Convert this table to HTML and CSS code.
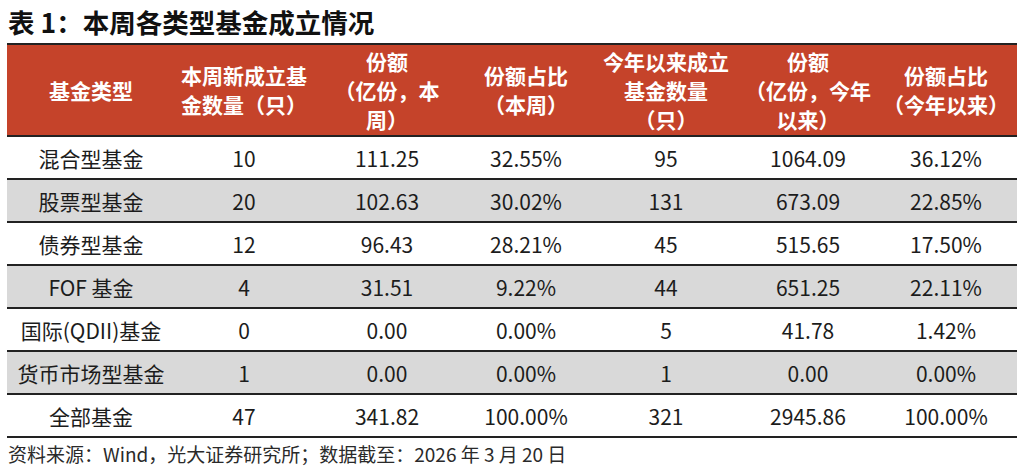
FILE: index.html
```html
<!DOCTYPE html>
<html lang="zh-CN">
<head>
<meta charset="utf-8">
<title>表 1：本周各类型基金成立情况</title>
<link rel="stylesheet" href="styles.css">
</head>
<body>
<div class="page">
  <h1 class="title">表 1：本周各类型基金成立情况</h1>
  <table class="fund-table">
    <colgroup>
      <col class="c1"><col class="c2"><col class="c3"><col class="c4"><col class="c5"><col class="c6"><col class="c7">
    </colgroup>
    <thead>
      <tr>
        <th>基金类型</th>
        <th>本周新成立基<br>金数量（只）</th>
        <th>份额<br>（亿份，本<br>周）</th>
        <th>份额占比<br>（本周）</th>
        <th>今年以来成立<br>基金数量<br>（只）</th>
        <th>份额<br>（亿份，今年<br>以来）</th>
        <th>份额占比<br>（今年以来）</th>
      </tr>
    </thead>
    <tbody>
      <tr><td>混合型基金</td><td>10</td><td>111.25</td><td>32.55%</td><td>95</td><td>1064.09</td><td>36.12%</td></tr>
      <tr class="alt"><td>股票型基金</td><td>20</td><td>102.63</td><td>30.02%</td><td>131</td><td>673.09</td><td>22.85%</td></tr>
      <tr><td>债券型基金</td><td>12</td><td>96.43</td><td>28.21%</td><td>45</td><td>515.65</td><td>17.50%</td></tr>
      <tr class="alt"><td>FOF 基金</td><td>4</td><td>31.51</td><td>9.22%</td><td>44</td><td>651.25</td><td>22.11%</td></tr>
      <tr><td>国际(QDII)基金</td><td>0</td><td>0.00</td><td>0.00%</td><td>5</td><td>41.78</td><td>1.42%</td></tr>
      <tr class="alt"><td>货币市场型基金</td><td>1</td><td>0.00</td><td>0.00%</td><td>1</td><td>0.00</td><td>0.00%</td></tr>
      <tr><td>全部基金</td><td>47</td><td>341.82</td><td>100.00%</td><td>321</td><td>2945.86</td><td>100.00%</td></tr>
    </tbody>
  </table>
  <p class="source">资料来源：Wind，光大证券研究所；数据截至：2026 年 3 月 20 日</p>
</div>
</body>
</html>
```
FILE: styles.css
```css
html, body {
  margin: 0;
  padding: 0;
  background: #ffffff;
}

body {
  font-family: "Noto Sans CJK SC", "Noto Sans", sans-serif;
  color: #1c1c1c;
}

.page {
  padding: 6px 8px 0 7px;
  width: 1010px;
}

.title {
  margin: 0 0 0 1px;
  font-size: 26.5px;
  line-height: 32px;
  font-weight: 700;
  color: #111;
  height: 37px;
}

.fund-table {
  width: 1010px;
  border-collapse: collapse;
  table-layout: fixed;
}

.c1 { width: 168px; }
.c2 { width: 138px; }
.c3 { width: 148px; }
.c4 { width: 130px; }
.c5 { width: 150px; }
.c6 { width: 134px; }
.c7 { width: 142px; }

.fund-table th {
  background: #c5432a;
  color: #ffffff;
  font-weight: 700;
  font-size: 21px;
  line-height: 29px;
  height: 90px;
  padding: 0 2px;
  text-align: center;
  vertical-align: middle;
  border-top: 2px solid #222;
  border-bottom: 2px solid #222;
}

.fund-table td {
  font-size: 21px;
  line-height: 28px;
  height: 41px;
  padding: 0 2px;
  text-align: center;
  vertical-align: middle;
  border-bottom: 2px solid #222;
  white-space: nowrap;
}

.fund-table tr.alt td {
  background: #d9d9d9;
}

.source {
  margin: 3px 0 0 1px;
  font-size: 19px;
  line-height: 26px;
  color: #2a2a2a;
}
```
